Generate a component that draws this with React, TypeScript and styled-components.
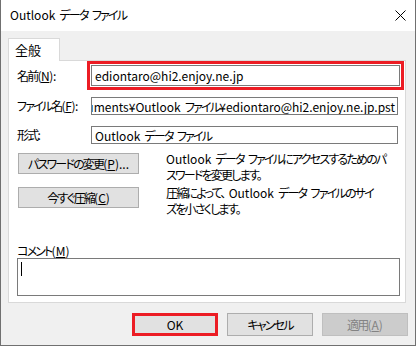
import React, { FC, ReactNode } from 'react';
import styled, { createGlobalStyle } from 'styled-components';

const GlobalStyle = createGlobalStyle`
  body {
    margin: 0;
    font-family: "Noto Sans CJK JP", "Noto Sans", sans-serif;
    font-size: 12px;
    font-feature-settings: "palt";
    word-spacing: 1.5px;
    color: #000;
  }
`;

const colors = {
  face: '#f0f0f0',
  frame: '#707070',
  tabLine: '#d9d9d9',
  field: '#7a7a7a',
  button: '#e1e1e1',
  buttonLine: '#adadad',
  red: '#ec1c24',
};

// Japanese runs: Meiryo UI kana are much narrower than Noto's
const J = styled.span`
  letter-spacing: -1.8px;
`;

const Window = styled.div`
  width: 416px;
  height: 346px;
  box-sizing: border-box;
  border: 1px solid ${colors.frame};
  border-top: none;
  background: ${colors.face};
  display: flex;
  flex-direction: column;
`;

const TitleBar = styled.div`
  height: 31px;
  flex-shrink: 0;
  background: #fff;
  display: flex;
  align-items: center;
  justify-content: space-between;
  padding: 0 9px;
`;

const Title = styled.div`
  line-height: 14px;
  margin-top: -1px;
`;

const Body = styled.div`
  flex: 1;
  display: flex;
  flex-direction: column;
  padding: 7px 7px 0 7px;
`;

const Tab = styled.div`
  width: 52px;
  height: 23px;
  box-sizing: border-box;
  border: 1px solid ${colors.tabLine};
  border-bottom: none;
  background: #fff;
  padding-left: 6px;
  line-height: 21px;
  font-size: 13px;
  position: relative;
  z-index: 1;
  margin-bottom: -1px;
`;

const Panel = styled.div`
  height: 243px;
  box-sizing: border-box;
  border: 1px solid ${colors.tabLine};
  background: #fff;
  margin-right: 2px;
  padding: 4px 5px 6px 8px;
  display: flex;
  flex-direction: column;
`;

const FormGrid = styled.div`
  display: grid;
  grid-template-columns: 74px 1fr;
  grid-template-rows: 21px 18px 18px;
  row-gap: 11px;
  align-items: center;
`;

const Label = styled.div`
  white-space: nowrap;
  line-height: 14px;
  letter-spacing: -0.4px;
`;

const FieldBox = styled.div<{ $inset?: number; $marked?: boolean; $alignEnd?: boolean }>`
  height: 100%;
  box-sizing: border-box;
  border: 1px solid ${colors.field};
  margin-right: ${p => p.$inset ?? 0}px;
  padding: 0 2px 0 3px;
  display: flex;
  align-items: center;
  justify-content: ${p => (p.$alignEnd ? 'flex-end' : 'flex-start')};
  overflow: hidden;
  white-space: nowrap;
  outline: ${p => (p.$marked ? `3px solid ${colors.red}` : 'none')};
  outline-offset: 1px;
`;

const FieldText = styled.span`
  flex-shrink: 0;
`;

const Field: FC<{ inset?: number; marked?: boolean; alignEnd?: boolean; children: ReactNode }> = ({
  inset,
  marked,
  alignEnd,
  children,
}) => (
  <FieldBox $inset={inset} $marked={marked} $alignEnd={alignEnd}>
    <FieldText>{children}</FieldText>
  </FieldBox>
);

const Actions = styled.div`
  margin-top: 9px;
  display: grid;
  grid-template-columns: 121px 1fr;
  grid-auto-rows: 34px;
  column-gap: 27px;
  margin-left: 1px;
`;

const Button = styled.div<{ $marked?: boolean; $disabled?: boolean }>`
  box-sizing: border-box;
  height: 21px;
  display: flex;
  align-items: center;
  justify-content: center;
  background: ${p => (p.$disabled ? '#cccccc' : colors.button)};
  border: ${p =>
    p.$marked
      ? `3px solid ${colors.red}`
      : `1px solid ${p.$disabled ? '#bfbfbf' : colors.buttonLine}`};
  color: ${p => (p.$disabled ? '#838383' : '#000')};
  white-space: nowrap;
`;

const Description = styled.div`
  line-height: 16px;
  margin-top: -2px;
  white-space: nowrap;
`;

const Comment = styled.div`
  margin-top: auto;
  display: flex;
  flex-direction: column;
`;

const CommentLabel = styled.div`
  line-height: 14px;
`;

const CommentBox = styled.div`
  height: 38px;
  box-sizing: border-box;
  border: 1px solid ${colors.field};
  padding: 3px;
`;

const Caret = styled.div`
  width: 1px;
  height: 14px;
  background: #000;
`;

const Footer = styled.div`
  margin-top: 10px;
  display: flex;
  justify-content: flex-end;
  gap: 9px;

  ${Button} {
    width: 86px;
    height: 23px;
  }
`;

const CloseIcon: FC = () => (
  <svg width="11" height="11" viewBox="0 0 11 11">
    <path d="M0.5 0.5 L10.5 10.5 M10.5 0.5 L0.5 10.5" stroke="#000" strokeWidth="1" fill="none" />
  </svg>
);

export default function App() {
  return (
    <>
      <GlobalStyle />
      <Window>
        <TitleBar>
          <Title>
            Outlook <J>データ</J> <J>ファイル</J>
          </Title>
          <CloseIcon />
        </TitleBar>
        <Body>
          <Tab>全般</Tab>
          <Panel>
            <FormGrid>
              <Label>
                <J>名前</J>(<u>N</u>):
              </Label>
              <Field marked>ediontaro@hi2.enjoy.ne.jp</Field>
              <Label>
                <J>ファイル名</J>(<u>F</u>):
              </Label>
              <Field inset={2} alignEnd>
                Documents¥Outlook <J>ファイル</J>¥ediontaro@hi2.enjoy.ne.jp.pst
              </Field>
              <Label>
                <J>形式</J>:
              </Label>
              <Field inset={2}>
                Outlook <J>データ</J> <J>ファイル</J>
              </Field>
            </FormGrid>
            <Actions>
              <Button>
                <J>パスワードの変更</J>(<u>P</u>)...
              </Button>
              <Description>
                Outlook <J>データ</J> <J>ファイルにアクセスするためのパ</J>
                <br />
                <J>スワードを変更します。</J>
              </Description>
              <Button>
                <J>今すぐ圧縮</J>(<u>C</u>)
              </Button>
              <Description>
                <J>圧縮によって、</J> Outlook <J>データ</J> <J>ファイルのサイ</J>
                <br />
                <J>ズを小さくします。</J>
              </Description>
            </Actions>
            <Comment>
              <CommentLabel>
                <J>コメント</J>(<u>M</u>)
              </CommentLabel>
              <CommentBox>
                <Caret />
              </CommentBox>
            </Comment>
          </Panel>
          <Footer>
            <Button $marked>OK</Button>
            <Button>
              <J>キャンセル</J>
            </Button>
            <Button $disabled>
              <J>適用</J>(<u>A</u>)
            </Button>
          </Footer>
        </Body>
      </Window>
    </>
  );
}
